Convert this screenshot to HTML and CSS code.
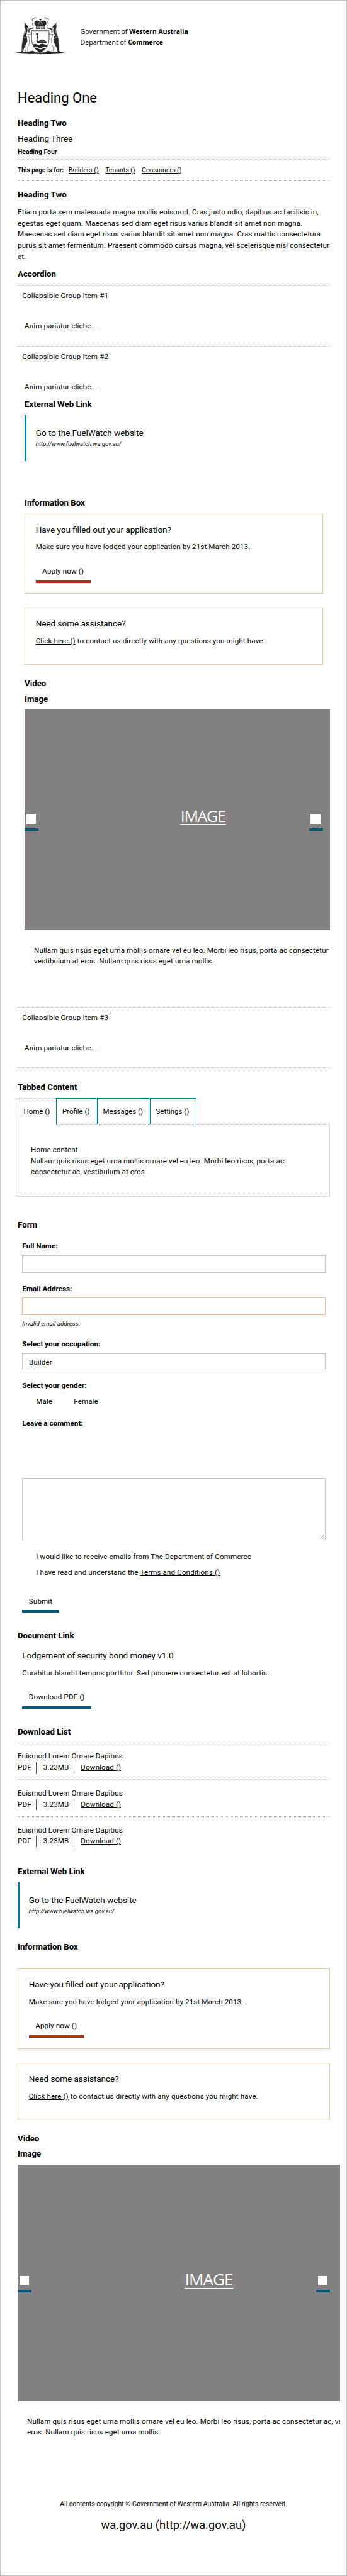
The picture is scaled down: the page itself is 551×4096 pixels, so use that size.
FILE: index.html
```html
<!DOCTYPE html>
<html lang="en">
<head>
<meta charset="utf-8">
<title>Department of Commerce</title>
<link rel="stylesheet" href="styles.css">
</head>
<body>
<div class="page">
  <header class="header">
    <svg class="crest" viewBox="45 33 370 267" aria-hidden="true">
      <path fill="#222" d="M45 291C80 279 150 281 230 287C310 281 380 279 415 291C370 302 90 302 45 291Z"/>
      <g>
        <path fill="#fff" stroke="#333" stroke-width="2.5" d="M136 108L144 112L146 120L138 124L139 140L166 151L166 158L140 157L152 190L150 225L140 250L138 278L146 284L124 285L128 250L120 240L108 256L106 282L96 282L99 235L104 205L108 170L118 138L122 110Z"/>
        <path fill="#292929" d="M114 72L122 82L126 73L129 88L143 99L145 106L134 109L139 124L134 142L133 155L126 160L134 178L137 208L128 226L110 262L107 284L94 284L80 290L101 274L98 240L103 212L102 190L116 152L121 120L115 100L119 88Z"/>
        <path fill="none" stroke="#fff" stroke-width="3" d="M125 118L122 148M112 178L131 185"/>
        <path fill="none" stroke="#292929" stroke-width="8" d="M149 141Q144 115 169 114L182 110"/>
        <path fill="none" stroke="#eee" stroke-width="2" d="M153 138Q150 120 174 117"/>
      </g>
      <g transform="matrix(-1 0 0 1 461 0)">
        <path fill="#fff" stroke="#333" stroke-width="2.5" d="M136 108L144 112L146 120L138 124L139 140L166 151L166 158L140 157L152 190L150 225L140 250L138 278L146 284L124 285L128 250L120 240L108 256L106 282L96 282L99 235L104 205L108 170L118 138L122 110Z"/>
        <path fill="#292929" d="M114 72L122 82L126 73L129 88L143 99L145 106L134 109L139 124L134 142L133 155L126 160L134 178L137 208L128 226L110 262L107 284L94 284L80 290L101 274L98 240L103 212L102 190L116 152L121 120L115 100L119 88Z"/>
        <path fill="none" stroke="#fff" stroke-width="3" d="M125 118L122 148M112 178L131 185"/>
        <path fill="none" stroke="#292929" stroke-width="8" d="M149 141Q144 115 169 114L182 110"/>
        <path fill="none" stroke="#eee" stroke-width="2" d="M153 138Q150 120 174 117"/>
      </g>
      <path fill="none" stroke="#444" stroke-width="5" stroke-dasharray="5 2" d="M205 42Q188 32 184 46Q170 40 172 60Q180 62 176 76Q168 84 178 94M255 42Q272 32 276 46Q290 40 288 60Q280 62 284 76Q292 84 282 94"/>
      <path fill="#222" d="M188 84C182 60 205 52 229 64C255 52 278 60 272 84L260 99H200Z"/>
      <path fill="#333" d="M226 64L228 56L222 54V48H238V54L232 56L234 64Z"/>
      <path fill="none" stroke="#fff" stroke-width="3" d="M216 84Q221 68 229 68Q238 68 244 84M206 91Q230 84 254 91"/>
      <path fill="#555" d="M198 101H262L264 119H198Z"/>
      <path fill="none" stroke="#ddd" stroke-width="4" d="M205 105H258M214 101V119M232 101V119M248 101V119"/>
      <path fill="#fff" stroke="#333" stroke-width="4" d="M168 131H292C291 170 300 215 273 253Q254 274 230 290Q206 274 187 253C160 215 169 170 168 131Z"/>
      <path fill="none" stroke="#777" stroke-width="2" d="M175 137H285"/>
      <path fill="#262626" d="M178 231Q192 220 205 230Q218 237 230 228Q248 220 258 229Q270 236 282 229L275 248Q262 240 252 248Q230 262 210 249Q195 240 184 246Z"/>
      <path fill="#262626" d="M188 256Q200 248 213 258Q232 270 249 258Q262 250 271 255Q253 274 230 288Q204 274 188 256Z"/>
      <path fill="#222" d="M196 161Q200 146 211 148Q218 152 214 172Q208 190 210 203Q217 208 225 201Q242 188 260 200L280 212L266 222H212Q199 216 202 200Q203 182 208 170Q211 158 207 155L199 162Z"/>
      <path fill="none" stroke="#bbb" stroke-width="2" d="M226 208Q240 198 260 209M232 214L262 203"/>
      <path fill="none" stroke="#333" stroke-width="5" d="M148 283L175 276L195 287M312 283L285 276L265 287"/>
    </svg>
    <div class="agency">
      <div>Government of <b>Western Australia</b></div>
      <div>Department of <b>Commerce</b></div>
    </div>
  </header>

  <main class="content">
    <h1>Heading One</h1>
    <h2 class="first">Heading Two</h2>
    <h3 class="sub">Heading Three</h3>
    <h4>Heading Four</h4>
    <nav class="audience">
      <b>This page is for:</b>
      <a>Builders ()</a>
      <a>Tenants ()</a>
      <a>Consumers ()</a>
    </nav>
    <h2 class="intro-title">Heading Two</h2>
    <p class="intro">Etiam porta sem malesuada magna mollis euismod. Cras justo odio, dapibus ac facilisis in,<br>egestas eget quam. Maecenas sed diam eget risus varius blandit sit amet non magna.<br>Maecenas sed diam eget risus varius blandit sit amet non magna. Cras mattis consectetura<br>purus sit amet fermentum. Praesent commodo cursus magna, vel scelerisque nisl consectetur<br>et.</p>

    <h2 class="accordion-title">Accordion</h2>
    <div class="accordion">
      <section class="group">
        <p class="group-title">Collapsible Group Item #1</p>
        <div class="group-body"><p>Anim pariatur cliche...</p></div>
      </section>
      <section class="group">
        <p class="group-title">Collapsible Group Item #2</p>
        <div class="group-body">
          <p>Anim pariatur cliche...</p>
          <h2 class="ext-title">External Web Link</h2>
          <div class="ext">
            <h3>Go to the FuelWatch website</h3>
            <p class="url">http://www.fuelwatch.wa.gov.au/</p>
          </div>
          <h2 class="info-title">Information Box</h2>
          <div class="info info-apply">
            <h3>Have you filled out your application?</h3>
            <p>Make sure you have lodged your application by 21st March 2013.</p>
            <a class="btn btn-red">Apply now ()</a>
          </div>
          <div class="info info-help">
            <h3>Need some assistance?</h3>
            <p><a class="link">Click here ()</a> to contact us directly with any questions you might have.</p>
          </div>
          <h2 class="video-title">Video</h2>
          <h2 class="image-title">Image</h2>
          <figure class="gallery">
            <div class="picture">
              <span class="picture-label">IMAGE</span>
              <span class="arrow prev"><i></i></span>
              <span class="arrow next"><i></i></span>
            </div>
            <figcaption>Nullam quis risus eget urna mollis ornare vel eu leo. Morbi leo risus, porta ac consectetur ac,<br>vestibulum at eros. Nullam quis risus eget urna mollis.</figcaption>
          </figure>
        </div>
      </section>
      <section class="group last">
        <p class="group-title">Collapsible Group Item #3</p>
        <div class="group-body"><p>Anim pariatur cliche...</p></div>
      </section>
    </div>

    <h2 class="tabs-title">Tabbed Content</h2>
    <div class="tabs">
      <a class="tab active">Home ()</a>
      <a class="tab tab-profile">Profile ()</a>
      <a class="tab tab-messages">Messages ()</a>
      <a class="tab tab-settings">Settings ()</a>
    </div>
    <div class="panel">Home content.<br>Nullam quis risus eget urna mollis ornare vel eu leo. Morbi leo risus, porta ac<br>consectetur ac, vestibulum at eros.</div>

    <h2 class="form-title">Form</h2>
    <form class="form">
      <label class="label name">Full Name:</label>
      <div class="field"></div>
      <label class="label email">Email Address:</label>
      <div class="field invalid"></div>
      <p class="help">Invalid email address.</p>
      <label class="label occupation">Select your occupation:</label>
      <div class="field select">Builder</div>
      <label class="label gender">Select your gender:</label>
      <div class="radios"><span>Male</span><span>Female</span></div>
      <label class="label comment">Leave a comment:</label>
      <div class="field textarea">
        <svg class="grip" viewBox="0 0 10 10"><path d="M1 9L9 1M6 9L9 6" stroke="#777" stroke-width="1.2"/></svg>
      </div>
      <p class="check">I would like to receive emails from The Department of Commerce</p>
      <p class="check terms">I have read and understand the <a class="link">Terms and Conditions ()</a></p>
      <a class="btn submit">Submit</a>
    </form>

    <h2 class="doc-title">Document Link</h2>
    <div class="doc">
      <h3>Lodgement of security bond money v1.0</h3>
      <p>Curabitur blandit tempus porttitor. Sed posuere consectetur est at lobortis.</p>
      <a class="btn">Download PDF ()</a>
    </div>

    <h2 class="list-title">Download List</h2>
    <ul class="downloads">
      <li>Euismod Lorem Ornare Dapibus<div class="meta"><span>PDF</span><span>3.23MB</span><a class="link">Download ()</a></div></li>
      <li>Euismod Lorem Ornare Dapibus<div class="meta"><span>PDF</span><span>3.23MB</span><a class="link">Download ()</a></div></li>
      <li>Euismod Lorem Ornare Dapibus<div class="meta"><span>PDF</span><span>3.23MB</span><a class="link">Download ()</a></div></li>
    </ul>

    <div class="wide">
      <h2 class="ext-title">External Web Link</h2>
      <div class="ext">
        <h3>Go to the FuelWatch website</h3>
        <p class="url">http://www.fuelwatch.wa.gov.au/</p>
      </div>
      <h2 class="info-title">Information Box</h2>
      <div class="info info-apply">
        <h3>Have you filled out your application?</h3>
        <p>Make sure you have lodged your application by 21st March 2013.</p>
        <a class="btn btn-red">Apply now ()</a>
      </div>
      <div class="info info-help">
        <h3>Need some assistance?</h3>
        <p><a class="link">Click here ()</a> to contact us directly with any questions you might have.</p>
      </div>
      <h2 class="video-title">Video</h2>
      <h2 class="image-title">Image</h2>
      <figure class="gallery">
        <div class="picture">
          <span class="picture-label">IMAGE</span>
          <span class="arrow prev"><i></i></span>
          <span class="arrow next"><i></i></span>
        </div>
        <figcaption>Nullam quis risus eget urna mollis ornare vel eu leo. Morbi leo risus, porta ac consectetur ac, vestibulum at<br>eros. Nullam quis risus eget urna mollis.</figcaption>
      </figure>
    </div>
  </main>

  <footer class="footer">
    <p class="copyright">All contents copyright © Government of Western Australia. All rights reserved.</p>
    <p class="portal">wa.gov.au (http://wa.gov.au)</p>
  </footer>
</div>
</body>
</html>
```
FILE: styles.css
```css
/* 1rem = 10 design units */
html { font-size: 6.669px; }
* { box-sizing: border-box; }
body {
  margin: 0;
  background: #fff;
  color: #000;
  font-family: Roboto, "Liberation Sans", sans-serif;
  font-size: 1.74rem;
  line-height: 2.667rem;
  letter-spacing: .0105em;
}
h1, h2, h3, h4, p, ul, figure { margin: 0; padding: 0; }
ul { list-style: none; }

.page {
  width: 551px;
  height: 4096px;
  border: 1px solid #c4c4c4;
  overflow: hidden;
}

/* Header */
.header {
  display: flex;
  align-items: flex-start;
  gap: 3.3rem;
  height: 13.07rem;
  padding: 3.95rem 0 0 3.35rem;
}
.crest { width: 12.33rem; height: 8.9rem; }
.agency {
  margin-top: 2.21rem;
  font: 1.59rem/2.6rem "Open Sans", "Noto Sans", sans-serif;
  letter-spacing: 0;
}
.agency b { font-size: 1.56rem; }

.content { padding: 0 3.85rem 0 4.05rem; }

/* Headings */
h1 { margin-top: 8.19rem; font-size: 3.3rem; line-height: 4rem; font-weight: 400; letter-spacing: 0; }
h2 { font-size: 1.99rem; font-weight: 700; letter-spacing: 0; }
h3 { font-size: 2.02rem; font-weight: 400; letter-spacing: 0; }
h4 { margin-top: .61rem; font-size: 1.56rem; font-weight: 700; letter-spacing: 0; }
.first { margin-top: 2.64rem; }
.sub { margin-top: 1.02rem; }
.intro-title { margin-top: 2.01rem; }
.intro { margin-top: 1.49rem; white-space: nowrap; }
.accordion-title { margin-top: 1.39rem; }

.link, .audience a { text-decoration: underline; }

.audience {
  display: flex;
  gap: 1.6rem;
  margin-top: .23rem;
  padding: 1.25rem 0 1.03rem;
  border-top: 1px dotted #b5b5b5;
  border-bottom: 1px dotted #b5b5b5;
  font-size: 1.57rem;
  letter-spacing: 0;
}
.audience b { margin-right: -.42rem; font-size: 1.51rem; }

/* Accordion */
.accordion { margin-top: 1.16rem; }
.group { padding-top: 1.31rem; border-top: 1px dotted #b5b5b5; }
.group-title { padding-left: 1.1rem; }
.group-body { padding: 4.53rem 0 3.25rem 1.65rem; }
.group:nth-child(2) .group-body { padding-bottom: 9.37rem; }
.last { border-bottom: 1px dotted #b5b5b5; }
.last .group-body { padding-bottom: 3.19rem; }

/* External link */
.ext-title { margin-top: 1.38rem; }
.ext {
  height: 10.95rem;
  margin-top: 1.17rem;
  padding: 2.97rem 0 0 2.23rem;
  border-left: .55rem solid #007a99;
}
.url {
  margin-top: .24rem;
  font-size: 1.43rem;
  line-height: 2rem;
  font-style: italic;
  letter-spacing: 0;
}

/* Information boxes */
.info-title { margin-top: 8.72rem; }
.info {
  margin-right: 1.7rem;
  padding: 2.39rem 2.5rem 0;
  border: 1px solid #e2c9a6;
}
.info p { margin-top: 1.5rem; }
.info-apply { height: 19.05rem; margin-top: 1.18rem; }
.info-help { height: 13.54rem; margin-top: 3.38rem; }

.btn {
  display: block;
  width: fit-content;
  margin-top: 3.07rem;
  padding: 0 1.58rem .77rem;
  border-bottom: .62rem solid #00587a;
}
.btn-red { border-bottom-color: #a8320d; }

/* Image gallery */
.video-title { margin-top: 3.19rem; }
.image-title { margin-top: 1.04rem; }
.gallery { margin-top: 1.14rem; overflow: hidden; }
.picture {
  position: relative;
  height: 52.63rem;
  background: #828080;
}
.picture-label {
  position: absolute;
  left: 37.05rem;
  top: 23.45rem;
  width: 11rem;
  padding-left: .1rem;
  border-bottom: 1px solid #fff;
  color: #fff;
  font: 3.75rem/4.05rem "Open Sans", "Noto Sans", sans-serif;
  letter-spacing: -.052em;
  white-space: nowrap;
}
.arrow {
  position: absolute;
  top: 24.95rem;
  width: 3.3rem;
  height: 3.95rem;
  border-bottom: .62rem solid #00587a;
}
.arrow i { display: block; width: 2.27rem; height: 2.3rem; margin-left: .4rem; background: #fff; }
.prev { left: 0; }
.next { left: 67.75rem; }
.next::after {
  content: "";
  position: absolute;
  right: .25rem;
  bottom: -.15rem;
  width: 1px;
  height: 2px;
  background: #111;
}
.gallery figcaption { margin-top: 3.55rem; padding-left: 2.25rem; white-space: nowrap; }

/* Tabs */
.tabs-title { margin-top: 3.2rem; }
.tabs { display: flex; height: 6.21rem; margin-top: 1.3rem; }
.tab {
  height: 6.21rem;
  padding: 1.84rem 0 0 1.28rem;
  border: 1px solid #007a99;
  border-bottom: 0;
  font-size: 1.72rem;
  letter-spacing: 0;
}
.active {
  position: relative;
  width: 9.2rem;
  height: calc(6.21rem + 1px);
  border: 1px dotted #b5b5b5;
  border-width: 1px 0 0 1px;
  background: #fff;
}
.tab-profile { width: 9.6rem; }
.tab-messages { width: 12.5rem; margin-left: .1rem; }
.tab-settings { width: 11.1rem; margin-left: .1rem; }
.panel {
  height: 17.3rem;
  padding: 4.69rem 3rem 0;
  border: 1px dotted #b5b5b5;
  white-space: nowrap;
}

/* Form */
.form-title { margin-top: 5.36rem; }
.form { margin-top: 2.52rem; padding: 0 1.15rem 0 1.1rem; }
.label { display: block; font-size: 1.76rem; font-weight: 700; letter-spacing: 0; }
.field { height: 4.2rem; margin-top: .72rem; border: 1px solid #c4c4c4; }
.email { margin-top: 2.51rem; }
.invalid { border-color: #e2c08f; }
.help { margin-top: .95rem; font-size: 1.47rem; line-height: 2rem; font-style: italic; letter-spacing: 0; }
.occupation { margin-top: 2.78rem; }
.select { height: 4.06rem; padding: .75rem 1.45rem 0; }
.gender { margin-top: 2.47rem; }
.radios { display: flex; gap: 5.1rem; margin-top: .94rem; padding-left: 3.3rem; }
.comment { margin-top: 2.69rem; }
.textarea { display: flex; align-items: flex-end; justify-content: flex-end; height: 14.76rem; margin-top: 11.59rem; }
.grip { width: 1.1rem; height: 1.1rem; }
.check { margin-top: 2.76rem; padding-left: 3.3rem; }
.terms { margin-top: 1.12rem; }
.submit { margin-top: 4.21rem; padding-bottom: .58rem; }

/* Document link */
.doc-title { margin-top: 4.17rem; }
.doc { margin-top: 2.11rem; padding-left: 1.1rem; }
.doc p { margin-top: 1.57rem; }

/* Download list */
.list-title { margin-top: 4.19rem; }
.downloads { margin-top: 1.21rem; }
.downloads li { padding: 1.86rem 0 1.47rem; border-top: 1px dotted #b5b5b5; }
.meta { display: flex; }
.meta span { padding-right: 1.15rem; margin-right: 1.55rem; border-right: 1px solid #555; }

/* Full-width repeats */
.wide { margin-top: 3.07rem; }
.wide .ext-title { margin-top: 0; }
.wide .info-title { margin-top: 3.17rem; }
.wide .info { margin-right: 0; }
.wide .info-apply { margin-top: 3.83rem; }
.wide .video-title { margin-top: 3.21rem; }
.wide .gallery { margin-right: -2.3rem; }
.wide .picture { height: 56.4rem; }
.wide .picture-label { left: 39.75rem; top: 25.35rem; width: 11.7rem; font-size: 3.9rem; line-height: 4.05rem; letter-spacing: -.035em; }
.wide .arrow { top: 26.55rem; }
.wide .next { left: 71.1rem; }

/* Footer */
.footer { text-align: center; }
.copyright { margin-top: 14.37rem; font-size: 1.57rem; letter-spacing: 0; }
.portal { margin-top: 1.63rem; font-size: 2.735rem; line-height: 4rem; letter-spacing: 0; }
```
